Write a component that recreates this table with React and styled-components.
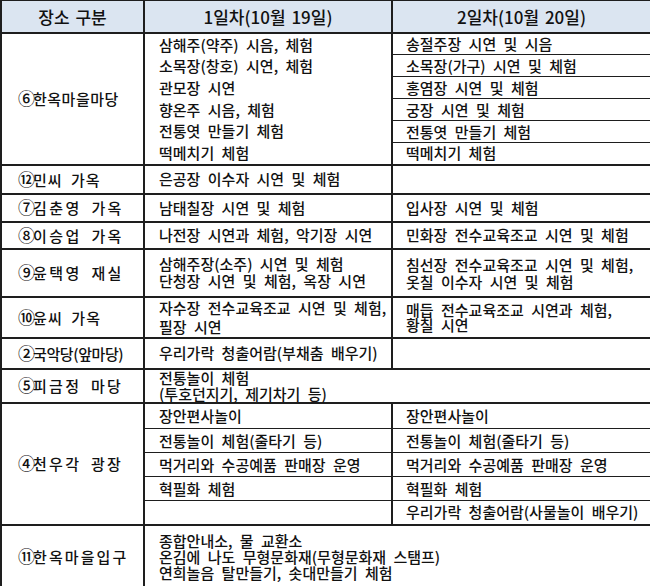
import React from 'react';
import styled, { createGlobalStyle } from 'styled-components';

const GlobalStyle = createGlobalStyle`
  html, body {
    margin: 0;
    padding: 0;
    background: #fff;
  }
  body {
    font-family: "Noto Sans CJK KR", "Noto Sans", sans-serif;
    color: #111;
  }
`;

const LINE = '#1e1e1e';

const Table = styled.table`
  width: 650px;
  border-collapse: collapse;
  table-layout: fixed;
  font-family: "Noto Sans CJK KR", "Noto Sans", sans-serif;
  font-size: 15px;
  font-weight: 500;
  word-spacing: 4px;
  color: #111;
`;

const Col = styled.col`
  width: ${p => p.$w}px;
`;

const Row = styled.tr`
  height: ${p => p.$h}px;
`;

const Th = styled.th`
  padding: 0;
  background: #dbe5f1;
  font-weight: 500;
  font-size: 17px;
  word-spacing: 2px;
  text-align: center;
  border: 2px solid ${LINE};
  border-top-width: 1px;
`;

const Place = styled.td`
  padding: 0 0 0 16px;
  border: 2px solid ${LINE};
  letter-spacing: ${p => p.$ls || 0}px;
  white-space: nowrap;
  vertical-align: middle;
`;

const Num = styled.span`
  display: inline-block;
  width: 15px;
  font-size: 17px;
  line-height: 1;
  text-align: center;
`;

const Cell = styled.td`
  padding: 0 0 0 ${p => p.$pad ?? 14}px;
  border-left: 2px solid ${LINE};
  border-right: 2px solid ${LINE};
  border-top: ${p => p.$top ?? 2}px solid ${LINE};
  border-bottom: ${p => p.$bottom ?? 2}px solid ${LINE};
  line-height: ${p => (p.$lh ? `${p.$lh}px` : '20px')};
  white-space: nowrap;
  vertical-align: middle;
`;

const Lines = ({ items }) =>
  items.map((t, i) => (
    <React.Fragment key={i}>
      {i > 0 && <br />}
      {t}
    </React.Fragment>
  ));

const Label = ({ n, text, ls, ...rest }) => (
  <Place $ls={ls} {...rest}>
    <Num>{n}</Num>
    {text}
  </Place>
);

const hanokDay1 = [
  '삼해주(약주) 시음, 체험',
  '소목장(창호) 시연, 체험',
  '관모장 시연',
  '향온주 시음, 체험',
  '전통엿 만들기 체험',
  '떡메치기 체험',
];

const hanokDay2 = [
  '송절주장 시연 및 시음',
  '소목장(가구) 시연 및 체험',
  '홍염장 시연 및 체험',
  '궁장 시연 및 체험',
  '전통엿 만들기 체험',
  '떡메치기 체험',
];

const plaza = [
  ['장안편사놀이', '장안편사놀이', 26],
  ['전통놀이 체험(줄타기 등)', '전통놀이 체험(줄타기 등)', 24],
  ['먹거리와 수공예품 판매장 운영', '먹거리와 수공예품 판매장 운영', 24],
  ['혁필화 체험', '혁필화 체험', 24],
  ['', '우리가락 청출어람(사물놀이 배우기)', 24],
];

const edge = (i, n) => ({
  $top: i === 0 ? 2 : 1,
  $bottom: i === n - 1 ? 2 : 1,
});

const App = () => {
  return (
    <>
      <GlobalStyle />
      <Table>
        <colgroup>
          <Col $w={143} />
          <Col $w={248} />
          <Col $w={259} />
        </colgroup>
        <thead>
          <Row $h={32}>
            <Th>장소 구분</Th>
            <Th>1일차(10월 19일)</Th>
            <Th>2일차(10월 20일)</Th>
          </Row>
        </thead>
        <tbody>
          {hanokDay2.map((t, i) => (
            <Row key={t + i} $h={22}>
              {i === 0 && (
                <>
                  <Label rowSpan={6} n="⑥" text="한옥마을마당" ls={0.5} />
                  <Cell rowSpan={6} $lh={21.6}>
                    <Lines items={hanokDay1} />
                  </Cell>
                </>
              )}
              <Cell $pad={13} $lh={20} {...edge(i, 6)}>{t}</Cell>
            </Row>
          ))}

          <Row $h={29}>
            <Label n="⑫" text="민씨 가옥" ls={1} />
            <Cell>은공장 이수자 시연 및 체험</Cell>
            <Cell $pad={13} />
          </Row>
          <Row $h={28}>
            <Label n="⑦" text="김춘영 가옥" ls={2.4} />
            <Cell>남태칠장 시연 및 체험</Cell>
            <Cell $pad={13}>입사장 시연 및 체험</Cell>
          </Row>
          <Row $h={27}>
            <Label n="⑧" text="이승업 가옥" ls={2.4} />
            <Cell>나전장 시연과 체험, 악기장 시연</Cell>
            <Cell $pad={13}>민화장 전수교육조교 시연 및 체험</Cell>
          </Row>
          <Row $h={48}>
            <Label n="⑨" text="윤택영 재실" ls={2.4} />
            <Cell $lh={16.5}>
              <Lines items={['삼해주장(소주) 시연 및 체험', '단청장 시연 및 체험, 옥장 시연']} />
            </Cell>
            <Cell $pad={13} $lh={17}>
              <Lines items={['침선장 전수교육조교 시연 및 체험,', '옷칠 이수자 시연 및 체험']} />
            </Cell>
          </Row>
          <Row $h={41}>
            <Label n="⑩" text="윤씨 가옥" ls={1.1} />
            <Cell $lh={19}>
              <Lines items={['자수장 전수교육조교 시연 및 체험,', '필장 시연']} />
            </Cell>
            <Cell $pad={13} $lh={15}>
              <Lines items={['매듭 전수교육조교 시연과 체험,', '황칠 시연']} />
            </Cell>
          </Row>
          <Row $h={31}>
            <Label n="②" text="국악당(앞마당)" ls={-0.4} />
            <Cell>우리가락 청출어람(부채춤 배우기)</Cell>
            <Cell $pad={13} />
          </Row>
          <Row $h={31}>
            <Label n="⑤" text="피금정 마당" ls={2.3} />
            <Cell colSpan={2} $lh={16}>
              <Lines items={['전통놀이 체험', '(투호던지기, 제기차기 등)']} />
            </Cell>
          </Row>

          {plaza.map(([a, b, h], i) => (
            <Row key={b} $h={h}>
              {i === 0 && <Label rowSpan={5} n="④" text="천우각 광장" ls={2.3} />}
              <Cell {...edge(i, 5)}>{a}</Cell>
              <Cell $pad={13} {...edge(i, 5)}>{b}</Cell>
            </Row>
          ))}

          <Row $h={64}>
            <Label n="⑪" text="한옥마을입구" ls={2.1} />
            <Cell colSpan={2} $lh={16}>
              <Lines
                items={[
                  '종합안내소, 물 교환소',
                  '온김에 나도 무형문화재(무형문화재 스탬프)',
                  '연희놀음 탈만들기, 솟대만들기 체험',
                ]}
              />
            </Cell>
          </Row>
        </tbody>
      </Table>
    </>
  );
};

export default App;
